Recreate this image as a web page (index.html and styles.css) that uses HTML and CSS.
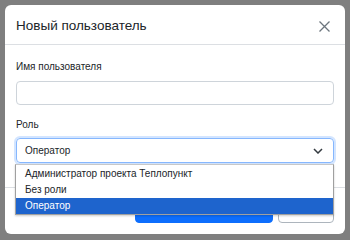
FILE: index.html
```html
<!DOCTYPE html>
<html lang="ru">
<head>
  <meta charset="UTF-8" />
  <title>Новый пользователь</title>
  <link rel="stylesheet" href="styles.css">
</head>
<body>
  <div class="modal">
    <div class="modal-header">
      <h5 class="modal-title">Новый пользователь</h5>
      <button class="btn-close" type="button" aria-label="Закрыть">
        <svg width="11" height="11" viewBox="0 0 11 11"><path d="M0.5 0.5 L10.5 10.5 M10.5 0.5 L0.5 10.5" stroke="#6c757d" stroke-width="1.3" fill="none"/></svg>
      </button>
    </div>
    <div class="modal-body">
      <label class="form-label" for="login">Имя пользователя</label>
      <input class="form-control" type="text" id="login" />
      <label class="form-label role-label" for="role">Роль</label>
      <div class="select-wrap">
        <div class="form-select" id="role">
          <span>Оператор</span>
          <svg width="10" height="6" viewBox="0 0 10 6"><path d="M1 1 L5 5 L9 1" stroke="#343a40" stroke-width="1.5" fill="none"/></svg>
        </div>
        <ul class="select-menu">
          <li>Администратор проекта Теплопункт</li>
          <li>Без роли</li>
          <li class="active">Оператор</li>
        </ul>
      </div>
    </div>
    <div class="modal-footer">
      <button class="btn btn-primary" type="button">Добавить пользователя</button>
      <button class="btn btn-secondary" type="button">Отмена</button>
    </div>
  </div>
</body>
</html>
```

FILE: styles.css
```css
body {
  margin: 0;
  background-color: #7f7f7f;
  font-family: 'Liberation Sans', Arial, sans-serif;
  color: #212529;
}
.modal {
  margin: 5px;
  width: 340px;
  height: 229px;
  background: #fff;
  border-radius: 6px;
  display: flex;
  flex-direction: column;
}
.modal-header {
  height: 39px;
  padding: 0 11px;
  display: flex;
  align-items: center;
  justify-content: space-between;
  border-bottom: 1px solid #dcdfe3;
}
.modal-title {
  margin: 0;
  font-size: 13.5px;
  font-weight: normal;
  padding-top: 2px;
}
.btn-close {
  background: none;
  border: none;
  padding: 0;
  margin-right: 4px;
  margin-top: 3px;
  width: 11px;
  height: 11px;
  line-height: 0;
}
.modal-body {
  padding: 15px 11px 0;
  height: 143px;
  box-sizing: border-box;
  border-bottom: 1px solid #dcdfe3;
}
.form-label {
  display: block;
  font-size: 10px;
  line-height: 14px;
  margin-bottom: 7px;
}
.role-label {
  margin-top: 13px;
  margin-bottom: 6px;
}
.form-control {
  display: block;
  box-sizing: border-box;
  width: 318px;
  height: 24px;
  margin: 0;
  border: 1px solid #ced4da;
  border-radius: 4px;
}
.select-wrap {
  position: relative;
}
.form-select {
  box-sizing: border-box;
  width: 318px;
  height: 25px;
  padding: 0 10px 0 8px;
  border: 1px solid #86b7fe;
  border-radius: 4px;
  box-shadow: 0 0 0 2px rgba(13, 110, 253, 0.18);
  display: flex;
  align-items: center;
  justify-content: space-between;
  font-size: 10px;
}
.select-menu {
  position: absolute;
  top: 26px;
  left: -1px;
  width: 319px;
  box-sizing: border-box;
  margin: 0;
  padding: 0;
  list-style: none;
  background: #fff;
  border: 1px solid #a0a0a0;
  border-top-color: #c8c8c8;
  box-shadow: 0 1px 2px rgba(0, 0, 0, 0.2);
  z-index: 2;
}
.select-menu li {
  height: 16px;
  line-height: 16px;
  padding-left: 9px;
  font-size: 10px;
}
.select-menu li:first-child {
  margin-top: 1px;
}
.select-menu li.active {
  background-color: #1e64cd;
  color: #fff;
}
.modal-footer {
  flex: 1;
  display: flex;
  justify-content: flex-end;
  align-items: flex-start;
  gap: 5px;
  padding: 11px 11px 0;
}
.btn {
  height: 24px;
  border-radius: 4px;
  font-family: inherit;
  font-size: 10px;
  padding: 0 0 3px;
}
.btn-primary {
  width: 138px;
  background-color: #0d6efd;
  border: 1px solid #0d6efd;
  color: #fff;
}
.btn-secondary {
  width: 56px;
  background: #fff;
  border: 1px solid #adb5bd;
  color: #6c757d;
}
```
